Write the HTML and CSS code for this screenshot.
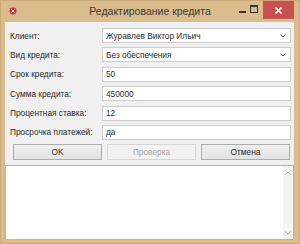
FILE: index.html
```html
<!DOCTYPE html>
<html>
<head>
    <title>Редактирование кредита</title>
    <link rel="stylesheet" href="styles.css">
</head>
<body>
    <div class="window">
        <div class="titlebar">
            <div class="tb-left">
                <svg class="app-icon" width="10" height="10" viewBox="0 0 10 10">
                    <circle cx="5" cy="5" r="4.5" fill="#b8b8b8"/>
                    <circle cx="5" cy="5" r="3.4" fill="#e02828"/>
                    <path d="M3.4 3.4 L6.6 6.6 M6.6 3.4 L3.4 6.6" stroke="#fff" stroke-width="1"/>
                </svg>
            </div>
            <div class="title">Редактирование кредита</div>
            <div class="controls">
                <div class="ctl"><span class="ctl-min"></span></div>
                <div class="ctl"><span class="ctl-max"></span></div>
                <div class="ctl-close">
                    <svg width="7" height="7" viewBox="0 0 7 7">
                        <path d="M0.5 0.5 L6.5 6.5 M6.5 0.5 L0.5 6.5" stroke="#fff" stroke-width="1.6"/>
                    </svg>
                </div>
            </div>
        </div>

        <div class="client">
            <div class="form">
                <label>Клиент:</label>
                <div class="combo">
                    <span>Журавлев Виктор Ильич</span>
                    <svg width="6" height="4" viewBox="0 0 6 4"><path d="M0.5 0.5 L3 3 L5.5 0.5" fill="none" stroke="#555" stroke-width="1"/></svg>
                </div>

                <label>Вид кредита:</label>
                <div class="combo">
                    <span>Без обеспечения</span>
                    <svg width="6" height="4" viewBox="0 0 6 4"><path d="M0.5 0.5 L3 3 L5.5 0.5" fill="none" stroke="#555" stroke-width="1"/></svg>
                </div>

                <label>Срок кредита:</label>
                <div class="field">50</div>

                <label>Сумма кредита:</label>
                <div class="field">450000</div>

                <label>Процентная ставка:</label>
                <div class="field">12</div>

                <label>Просрочка платежей:</label>
                <div class="field">да</div>
            </div>

            <div class="buttons">
                <button class="btn">OK</button>
                <button class="btn" disabled>Проверка</button>
                <button class="btn">Отмена</button>
            </div>

            <div class="memo">
                <div class="memo-text"></div>
                <div class="memo-scroll">
                    <svg width="6" height="4" viewBox="0 0 6 4"><path d="M0.5 3.5 L3 1 L5.5 3.5" fill="none" stroke="#a6a6a6" stroke-width="1"/></svg>
                    <svg width="6" height="4" viewBox="0 0 6 4"><path d="M0.5 0.5 L3 3 L5.5 0.5" fill="none" stroke="#a6a6a6" stroke-width="1"/></svg>
                </div>
            </div>
        </div>
    </div>
</body>
</html>
```

FILE: styles.css
```css
body {
    margin: 0;
    font-family: "Liberation Sans", Arial, sans-serif;
}

.window {
    width: 300px;
    height: 244px;
    box-sizing: border-box;
    background-color: #dabd8a;
    border: 1px solid #c9aa76;
    display: flex;
    flex-direction: column;
}

/* title bar */
.titlebar {
    height: 21px;
    display: grid;
    grid-template-columns: 1fr auto 1fr;
    align-items: start;
}
.tb-left {
    padding: 5px 0 0 7px;
}
.app-icon {
    display: block;
}
.title {
    font-size: 10.5px;
    color: #3a3a3a;
    line-height: 21px;
}
.controls {
    display: flex;
    justify-content: flex-end;
    padding-right: 5px;
}
.ctl {
    width: 12px;
    height: 18px;
    display: flex;
    align-items: center;
    justify-content: center;
}
.ctl-min {
    width: 7px;
    height: 2px;
    margin-top: 3px;
    background-color: #333;
}
.ctl-max {
    width: 6px;
    height: 5px;
    border: 1px solid #333;
    border-top-width: 2px;
    margin-top: -2px;
}
.ctl-close {
    width: 31px;
    height: 18px;
    margin-left: 3px;
    background-color: #c9504f;
    display: flex;
    align-items: center;
    justify-content: center;
}

/* client area */
.client {
    flex: 1;
    margin: 0 5px 3px 4px;
    background-color: #f0f0f0;
    display: flex;
    flex-direction: column;
    padding-top: 6px;
}
.form {
    display: grid;
    grid-template-columns: 92px 1fr;
    grid-auto-rows: 15px;
    row-gap: 4.4px;
    padding: 0 3px 0 5px;
    align-items: center;
    font-size: 8.3px;
    color: #2a2a2a;
}
.combo,
.field {
    height: 15px;
    box-sizing: border-box;
    background-color: #fff;
    border: 1px solid #cdcdcd;
    padding: 0 3px;
    display: flex;
    align-items: center;
}
.combo span {
    flex: 1;
}
.combo svg {
    margin-right: 1px;
}

.buttons {
    display: grid;
    grid-template-columns: repeat(3, 1fr);
    column-gap: 5px;
    padding: 0 4px 0 8px;
    margin-top: 4px;
}
.btn {
    height: 16px;
    margin: 0;
    padding: 0;
    font-family: "Liberation Sans", Arial, sans-serif;
    font-size: 8.3px;
    color: #2a2a2a;
    background: linear-gradient(#efefef, #e3e3e3);
    border: 1px solid #adadad;
    border-radius: 0;
}
.btn:disabled {
    color: #a8a8a8;
    background: #f2f2f2;
    border-color: #d6d6d6;
}

.memo {
    flex: 1;
    margin-top: 5px;
    border: 1px solid #92bdea;
    background-color: #fff;
    display: flex;
}
.memo-text {
    flex: 1;
}
.memo-scroll {
    width: 10px;
    background-color: #f4f4f4;
    display: flex;
    flex-direction: column;
    justify-content: space-between;
    align-items: center;
    padding: 5px 0 4px;
}
```
